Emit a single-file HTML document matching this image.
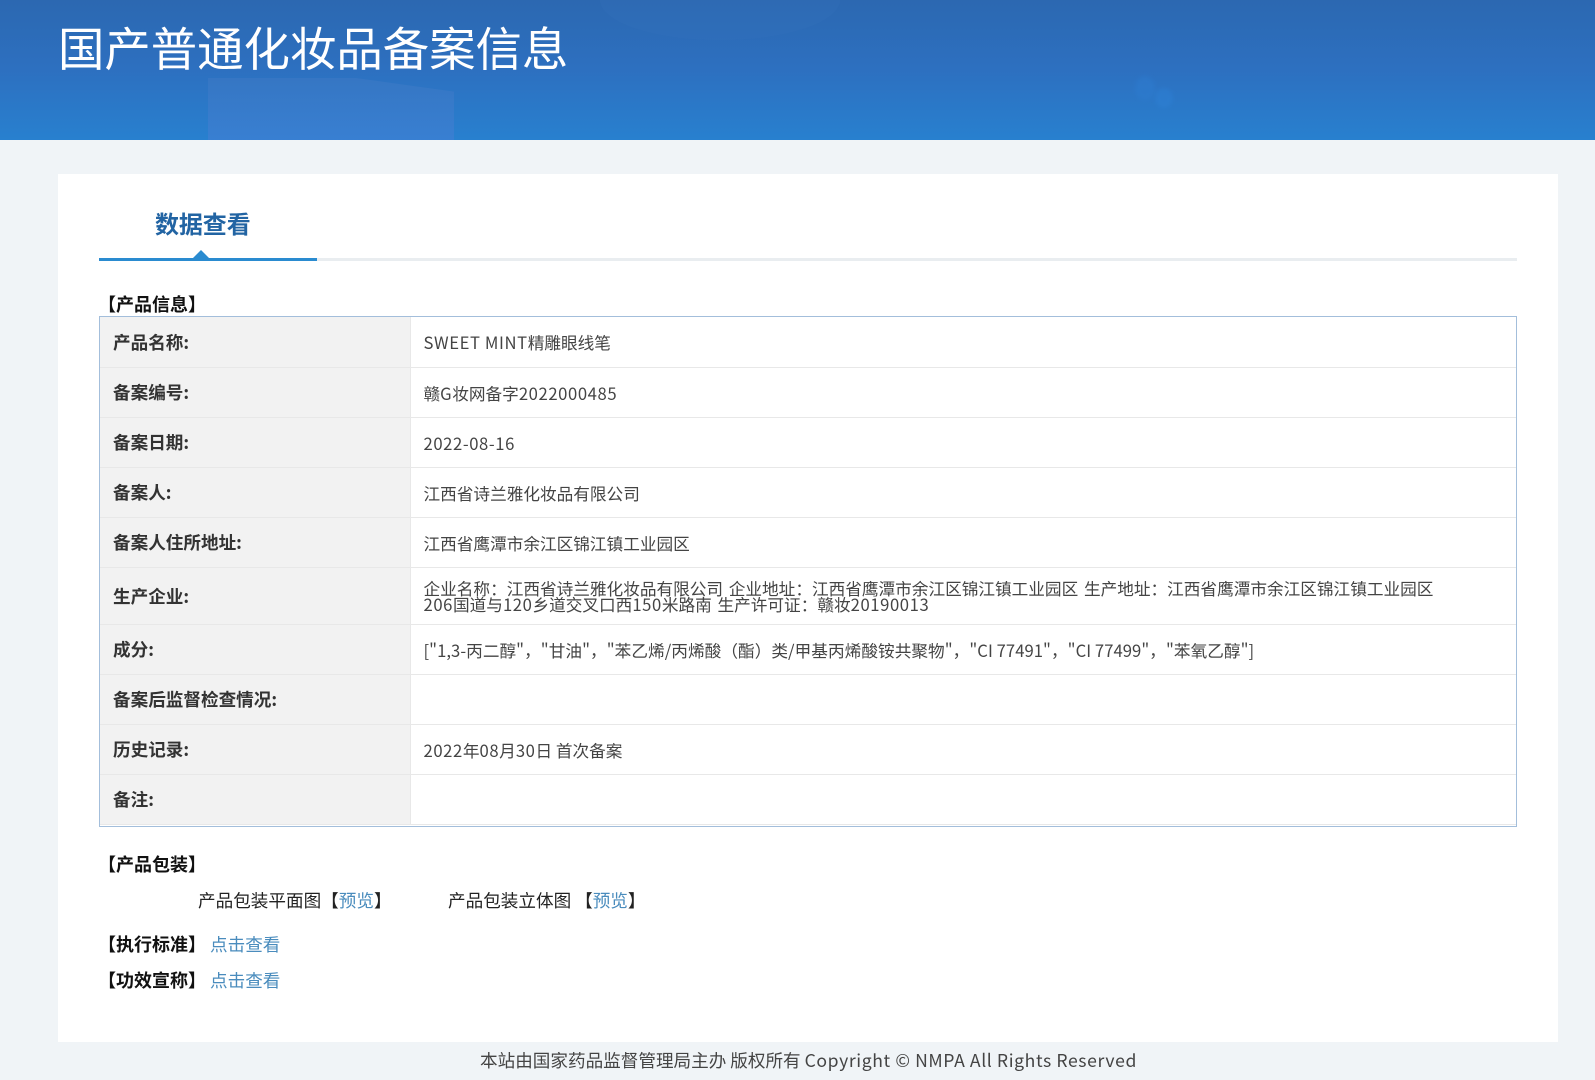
<!DOCTYPE html>
<html lang="zh-CN"><head><meta charset="utf-8"><title>国产普通化妆品备案信息</title>
<style>
*{box-sizing:border-box;margin:0;padding:0}
html,body{width:1595px;height:1080px;overflow:hidden;background:#f0f4f7}
body{position:relative;font-family:"Noto Sans CJK SC","Liberation Sans",sans-serif;color:#333}
.a{position:absolute;white-space:nowrap}
.n{letter-spacing:.6px}
#hd{left:0;top:0;width:1595px;height:140px;overflow:hidden;background:linear-gradient(180deg,#2c68b1 0%,#2d70c0 50%,#2880cf 100%)}
#hd i{position:absolute;display:block}
h1{position:absolute;left:58px;top:14px;font-size:46.4px;line-height:66px;font-weight:400;color:#fff;white-space:nowrap}
#card{left:58px;top:174px;width:1500px;height:868px;background:#fff}
#tab{left:155px;top:206px;font-size:24px;line-height:34px;font-weight:700;color:#2264a3;letter-spacing:-.1px}
#ln{left:99px;top:258px;width:1418px;height:3px;background:#e9edf0}
#ln2{left:99px;top:258px;width:218px;height:3px;background:#2a8bd0}
#tri{left:193px;top:250px;width:0;height:0;border-left:8px solid transparent;border-right:8px solid transparent;border-bottom:8px solid #2a8bd0}
.s{font-size:18px;line-height:24px;font-weight:700;color:#111}
#tb{left:99px;top:316px;width:1418px;height:511px;border:1px solid #a3bedb;background:#fff}
#tb table{width:1416px;border-collapse:collapse;table-layout:fixed}
td{border-bottom:1px solid #e8e8e8;vertical-align:middle;height:50px}
td.l{width:310px;background:#f2f2f2;font-weight:700;font-size:17.6px;line-height:20px;padding:2px 0 0 13px;color:#333;border-right:1px solid #e8e8e8}
td.v{padding:1px 0 0 13px;color:#444;line-height:16px;font-size:16.65px;font-weight:400}
.t{font-size:17.6px;line-height:26px;color:#222;font-weight:400}
a{color:#4a8cbd;text-decoration:none}
#ft{left:11px;top:1048px;width:1595px;text-align:center;font-size:17.6px;line-height:26px;color:#444;font-weight:400}
</style></head><body>
<div class="a" id="hd">
<i style="left:208px;top:78px;width:246px;height:62px;background:linear-gradient(180deg,#3a78c4,#3f7fd3);opacity:.7;clip-path:polygon(0 0,60% 0,100% 22%,100% 100%,0 100%)"></i>
<i style="left:600px;top:-40px;width:240px;height:80px;border-radius:50%;background:#3a78c0;opacity:.15"></i>
<i style="left:1135px;top:76px;width:20px;height:24px;border-radius:50%;background:#2f80d6;opacity:.35;filter:blur(2px)"></i>
<i style="left:1155px;top:88px;width:18px;height:20px;border-radius:50%;background:#2f85dc;opacity:.35;filter:blur(2px)"></i>
<h1>国产普通化妆品备案信息</h1>
</div>
<div class="a" id="card"></div>
<div class="a" id="tab">数据查看</div>
<div class="a" id="ln"></div><div class="a" id="ln2"></div><div class="a" id="tri"></div>
<div class="a s" style="left:98px;top:292px">【产品信息】</div>
<div class="a" id="tb"><table>
<tr><td class="l">产品名称:</td><td class="v"><span class="n">SWEET MINT</span>精雕眼线笔</td></tr>
<tr><td class="l">备案编号:</td><td class="v">赣<span class="n">G</span>妆网备字<span class="n">2022000485</span></td></tr>
<tr><td class="l">备案日期:</td><td class="v"><span class="n">2022-08-16</span></td></tr>
<tr><td class="l">备案人:</td><td class="v">江西省诗兰雅化妆品有限公司</td></tr>
<tr><td class="l">备案人住所地址:</td><td class="v">江西省鹰潭市余江区锦江镇工业园区</td></tr>
<tr><td class="l" style="height:57px">生产企业:</td><td class="v" style="height:57px;word-spacing:2px">企业名称&#xFF1A;江西省诗兰雅化妆品有限公司 企业地址&#xFF1A;江西省鹰潭市余江区锦江镇工业园区 生产地址&#xFF1A;江西省鹰潭市余江区锦江镇工业园区<br><span class="n">206</span>国道与<span class="n">120</span>乡道交叉口西<span class="n">150</span>米路南 生产许可证&#xFF1A;赣妆<span class="n">20190013</span></td></tr>
<tr><td class="l">成分:</td><td class="v" style="letter-spacing:.04px">["1,3-丙二醇"&#xFF0C;"甘油"&#xFF0C;"苯乙烯/丙烯酸&#xFF08;酯&#xFF09;类/甲基丙烯酸铵共聚物"&#xFF0C;"CI 77491"&#xFF0C;"CI 77499"&#xFF0C;"苯氧乙醇"]</td></tr>
<tr><td class="l">备案后监督检查情况:</td><td class="v"></td></tr>
<tr><td class="l">历史记录:</td><td class="v"><span class="n">2022</span>年<span class="n">08</span>月<span class="n">30</span>日 首次备案</td></tr>
<tr><td class="l">备注:</td><td class="v"></td></tr>
</table></div>
<div class="a s" style="left:98px;top:852px">【产品包装】</div>
<div class="a t" style="left:198px;top:888px">产品包装平面图【<a>预览</a>】</div>
<div class="a t" style="left:448px;top:888px">产品包装立体图 【<a>预览</a>】</div>
<div class="a s" style="left:98px;top:932px">【执行标准】</div>
<a class="a t" style="left:210px;top:932px;color:#4a8cbd">点击查看</a>
<div class="a s" style="left:98px;top:968px">【功效宣称】</div>
<a class="a t" style="left:210px;top:968px;color:#4a8cbd">点击查看</a>
<div class="a" id="ft">本站由国家药品监督管理局主办 版权所有 <span class="n">Copyright © NMPA All Rights Reserved</span></div>
</body></html>
